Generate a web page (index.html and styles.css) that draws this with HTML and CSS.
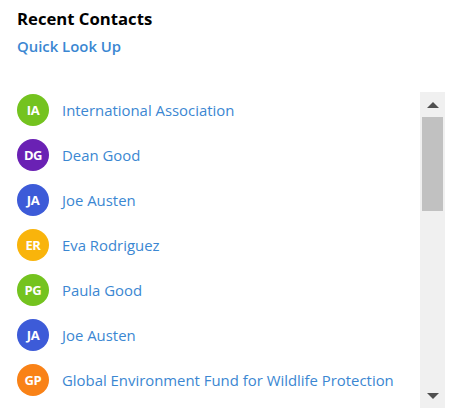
FILE: index.html
```html
<!DOCTYPE html>
<html>
<head>
<meta charset="utf-8">
<link rel="stylesheet" href="styles.css">
</head>
<body>
<div class="panel">
  <h1 class="title">Recent Contacts</h1>
  <a class="quick" href="#">Quick Look Up</a>
  <div class="listbox">
    <ul class="list">
      <li class="row"><span class="avatar green">IA</span><a class="name" href="#">International Association</a></li>
      <li class="row"><span class="avatar purple">DG</span><a class="name" href="#">Dean Good</a></li>
      <li class="row"><span class="avatar blue">JA</span><a class="name" href="#">Joe Austen</a></li>
      <li class="row"><span class="avatar yellow">ER</span><a class="name" href="#">Eva Rodriguez</a></li>
      <li class="row"><span class="avatar green">PG</span><a class="name" href="#">Paula Good</a></li>
      <li class="row"><span class="avatar blue">JA</span><a class="name" href="#">Joe Austen</a></li>
      <li class="row"><span class="avatar orange">GP</span><a class="name" href="#">Global Environment Fund for Wildlife Protection</a></li>
    </ul>
    <div class="scrollbar">
      <div class="sb-btn"><span class="tri up"></span></div>
      <div class="sb-track"><div class="sb-thumb"></div></div>
      <div class="sb-btn"><span class="tri down"></span></div>
    </div>
  </div>
</div>
</body>
</html>
```
FILE: styles.css
```css
html, body {
  margin: 0;
  padding: 0;
  background: #ffffff;
}
body {
  font-family: "Open Sans", "Noto Sans", sans-serif;
}
.panel {
  padding: 8px 12px 0 17px;
  display: flex;
  flex-direction: column;
}
.title {
  margin: 0;
  font-size: 16.7px;
  font-weight: 700;
  line-height: 22px;
  color: #000;
}
.quick {
  margin-top: 5px;
  font-size: 14.9px;
  font-weight: 600;
  line-height: 22px;
  color: #3b87d2;
  text-decoration: none;
  align-self: flex-start;
}
.listbox {
  margin-top: 35px;
  display: flex;
  height: 316px;
}
.list {
  list-style: none;
  margin: 0;
  padding: 2px 0 0 0;
  flex: 1;
  overflow: hidden;
  display: flex;
  flex-direction: column;
  gap: 13px;
}
.row {
  display: flex;
  align-items: center;
  gap: 13px;
  height: 32px;
  flex-shrink: 0;
}
.avatar {
  width: 32px;
  height: 32px;
  border-radius: 50%;
  display: flex;
  align-items: center;
  justify-content: center;
  color: #fff;
  font-size: 13px;
  font-weight: 700;
  flex-shrink: 0;
  letter-spacing: -0.4px;
}
.green { background: #74c31f; }
.purple { background: #6a21b4; }
.blue { background: #3d5bd8; }
.yellow { background: #f9b40b; }
.orange { background: #f98217; }
.name {
  font-size: 14.9px;
  color: #3b87d2;
  text-decoration: none;
  white-space: nowrap;
}
.scrollbar {
  width: 25px;
  background: #f0f0f0;
  display: flex;
  flex-direction: column;
  flex-shrink: 0;
}
.sb-btn {
  height: 25px;
  display: flex;
  align-items: center;
  justify-content: center;
}
.tri {
  width: 0;
  height: 0;
  border-left: 6px solid transparent;
  border-right: 6px solid transparent;
}
.tri.up { border-bottom: 6px solid #505050; }
.tri.down { border-top: 6px solid #505050; }
.sb-track {
  flex: 1;
  padding: 0 2px;
}
.sb-thumb {
  height: 94px;
  background: #c1c1c1;
}
```
